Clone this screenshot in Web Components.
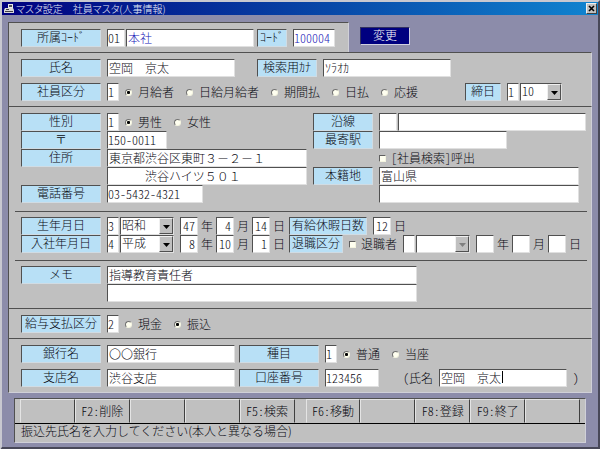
<!DOCTYPE html>
<html lang="ja">
<head>
<meta charset="utf-8">
<title>マスタ設定　社員マスタ(人事情報)</title>
<style>
html, body { height: 100%; }
body {
  margin: 0;
  font: 300 12px/14px "Noto Sans CJK JP", "Liberation Sans", sans-serif;
  color: #080810;
  --face: #c0c0c0;
  --lit: #e0e0e0;
  --dark: #505050;
  --frame: #8c8caa;
  --caption: #b8e0f6;
  --half: "hwid";
}
</style>
</head>
<body>
<employee-master></employee-master>

<script>
const define = (name, html, setup) => customElements.define(name, class extends HTMLElement {
  constructor() {
    super();
    this.attachShadow({ mode: "open" });
  }
  connectedCallback() {
    if (this.shadowRoot.childNodes.length) return;
    const t = document.createElement("template");
    t.innerHTML = typeof html === "function" ? html(this) : html;
    this.shadowRoot.append(t.content.cloneNode(true));
    if (setup) setup(this);
  }
});

/* Outer window with its title bar */
define("app-window", host => `
<style>
:host { display: flex; flex-direction: column; min-height: 100vh; box-sizing: border-box;
  background: var(--frame); border: 2px solid #c8c8d0; border-right-color: #484858; border-bottom: 3px solid #484858; }
header { display: flex; align-items: center; gap: 2px; height: 13px; padding: 0 1px 0 2px;
  background: linear-gradient(90deg, #000080, #0848a8 55%, #1084d0); color: #e8ecf8; }
h1 { margin: 0; flex: 1; font: inherit; font-size: 10px; line-height: 13px; font-feature-settings: "palt", "pwid"; }
button { width: 11px; height: 11px; padding: 0; display: grid; place-items: center; background: var(--face);
  border: 1px solid; border-color: #f0f0f0 #404040 #404040 #f0f0f0; }
main { flex: 1; padding: 7px 6px 4px; }
</style>
<header>
  <svg width="10" height="10" viewBox="0 0 10 10" aria-hidden="true">
    <path d="M4 0h5v4H4z" fill="#e8e8e8"/><path d="M5 1h3v2H5z" fill="#505058"/>
    <path d="M1 4h8l1 2v3H0V6z" fill="#d8d8d8"/><path d="M2 5h3v1H2zM1 7h8v1H1z" fill="#404048"/>
  </svg>
  <h1>${host.getAttribute("heading")}</h1>
  <button type="button" aria-label="閉じる"><svg width="7" height="7" viewBox="0 0 7 7"><path d="M1 1l5 5M6 1l-5 5" stroke="#000" stroke-width="1.6"/></svg></button>
</header>
<main><slot></slot></main>`);

/* Raised grey area holding rows */
define("form-panel", `
<style>
:host { display: flex; flex-direction: column; box-sizing: border-box; background: var(--face);
  border-top: 1px solid var(--dark); border-left: 1px solid var(--dark); border-right: 1px solid #d0d0d8;
  padding: 6px 4px var(--foot, 5px) 12px; gap: var(--row-gap, 0px); }
:host([last]) { border-bottom: 1px solid #d0d0d8; }
:host([inset]) { border-top: 0; padding-top: 0; }
:host([inset])::before { content: ""; border-top: 1px solid var(--dark); margin: 0 0 5px -6px; }
</style>
<slot></slot>`);

/* One line; the "end" slot starts at --split */
define("form-row", `
<style>
:host { display: flex; height: 18px; }
div { display: flex; align-items: stretch; gap: 6px; flex: none; }
.start { width: var(--split, auto); }
</style>
<div class="start"><slot></slot></div><div><slot name="end"></slot></div>`);

define("joined-fields", `
<style>:host { display: flex; gap: 1px; } :host([loose]) { gap: 3px; }</style><slot></slot>`);

/* Group of radio buttons sharing one name */
define("radio-set", host => {
  const picked = +host.getAttribute("picked");
  return `
<style>
:host { display: flex; align-items: center; gap: 12px; }
label { display: flex; align-items: center; gap: 6px; }
span { line-height: 18px; }
input { appearance: none; margin: 0; width: 7px; height: 7px; border-radius: 50%; background: #fffff0;
  border: 1px solid; border-color: #707070 #f4f4e0 #f4f4e0 #707070; box-sizing: border-box; display: grid; place-items: center; }
input:checked::before { content: ""; width: 3px; height: 3px; background: #000; border-radius: 1px; }
</style>` + host.getAttribute("options").split(",").map((o, i) =>
  `<label><input type="radio" name="r"${i === picked ? " checked" : ""}><span>${o}</span></label>`).join("");
});

define("check-item", host => `
<style>
:host { display: flex; align-items: center; }
label { display: flex; align-items: center; gap: 5px; line-height: 18px; font-feature-settings: var(--half); }
input { appearance: none; margin: 0; width: 7px; height: 7px; background: #fffff0; box-sizing: border-box;
  border: 1px solid; border-color: #606060 #f4f4e0 #f4f4e0 #606060; }
</style>
<label><input type="checkbox">${host.getAttribute("label")}</label>`);

/* Drop-down with a raised arrow key */
define("drop-down", host => {
  const off = host.hasAttribute("disabled"), v = host.getAttribute("value") || "";
  return `
<style>
:host { display: grid; grid-template-columns: 1fr 15px; width: var(--w, 54px); height: 18px; }
select { appearance: none; grid-area: 1 / 1 / 2 / 3; min-width: 0; margin: 0; padding: 0 15px 2px 1px; border-radius: 0;
  font: inherit; line-height: 14px; color: inherit; background: #fff; opacity: 1; font-feature-settings: var(--half);
  border: 1px solid; border-color: var(--dark) var(--lit) var(--lit) var(--dark); }
svg { grid-area: 1 / 2; pointer-events: none; margin: 1px 0; width: 12px; height: 14px; background: var(--face);
  border: 1px solid; border-color: #f0f0f0 #505050 #505050 #f0f0f0; }
</style>
<select aria-label="${host.getAttribute("label")}"${off ? " disabled" : ""}><option>${v}</option></select>
<svg viewBox="0 0 12 14" aria-hidden="true"><path d="M3 6h7l-3.5 4z" fill="${off ? "#808080" : "#000"}"/></svg>`;
});

/* Function keys and the guidance line */
define("function-bar", host => `
<style>
:host { display: block; margin: 5px 6px 0; border: 1px solid; border-color: var(--dark) #d0d0d8 #d0d0d8 var(--dark); background: var(--face); }
nav { display: flex; padding: 0 5px; border-bottom: 1px solid #000; }
nav button { flex: 1 1 0; min-width: 0; height: 24px; padding: 0; font: inherit; font-feature-settings: var(--half); color: inherit; background: var(--face); border: 1px solid;
  border-color: #e4e4e4 #404040 transparent #e4e4e4; border-radius: 0; }
nav button:nth-child(6) { margin-left: 11px; }
output { display: block; padding: 0 6px; height: 18px; line-height: 14px; font-feature-settings: "halt"; }
</style>
<nav>${host.getAttribute("keys").split(",").map((k, i) => `<button type="button"${k ? "" : ` aria-label="F${i + 1}"`}>${k}</button>`).join("")}</nav>
<output><slot></slot></output>`);

define("employee-master", `
<style>
:host { display: block; }
.top { display: flex; align-items: flex-start; }
.top form-panel { flex: 0 0 341px; }
.change { margin: 5px 0 0 11px; width: 50px; height: 18px; padding: 0 0 2px; font: inherit; line-height: 14px; color: #fff;
  background: #000080; border: 1px solid; border-color: #303060 #d0d0e0 #d0d0e0 #303060; border-radius: 0; }
label.cap { box-sizing: border-box; width: var(--w, 80px); height: 18px; text-align: center; white-space: nowrap;
  line-height: 14px; background: var(--caption);
  border: 1px solid; border-color: var(--dark) #d0dce4 #d0dce4 var(--dark); }
label.unit { width: 12px; text-align: center; line-height: 18px; }
input { box-sizing: border-box; width: var(--w, 128px); height: 18px; margin: 0; padding: 0 0 2px 1px; border-radius: 0;
  font: inherit; line-height: 14px; color: inherit; background: #fff; outline: 0;
  border: 1px solid; border-color: var(--dark) var(--lit) var(--lit) var(--dark); }
.num { font-feature-settings: var(--half); padding-left: 0; }
.n1 { --w: 12px; } .n2 { --w: 18px; } .right { text-align: right; padding-right: 2px; }
.w30 { --w: 30px; } .w36 { --w: 36px; } .w42 { --w: 42px; } .w54 { --w: 54px; } .w60 { --w: 60px; }
.w78 { --w: 78px; } .w96 { --w: 96px; } .w188 { --w: 188px; } .w200 { --w: 200px; } .w310 { --w: 310px; }
input.blue { color: #2020b8; }
.pad { visibility: hidden; }
.hold { margin-left: 18px; line-height: 18px; font-feature-settings: var(--half); }
.close { line-height: 18px; font-feature-settings: var(--half); }
/* text cursor of the active field */
.active { background: linear-gradient(#000, #000) 62px 1px / 1px 12px no-repeat #fff; }
.s236 { --split: 236px; } .s218 { --split: 218px; } .s292 { --split: 292px; } .s268 { --split: 268px; } .s444 { --split: 444px; }
</style>
<app-window heading="マスタ設定　社員マスタ(人事情報)">
  <div class="top">
    <form-panel>
      <form-row class="s236">
        <label class="cap" for="dept">所属ｺｰﾄﾞ</label>
        <joined-fields><input id="dept" class="num n2" value="01"><input class="blue" aria-label="所属名" value="本社"></joined-fields>
        <label slot="end" class="cap w30" for="code">ｺｰﾄﾞ</label><input slot="end" id="code" class="num blue w42" value="100004">
      </form-row>
    </form-panel>
    <button class="change" type="button">変更</button>
  </div>

  <form-panel style="--row-gap: 6px">
    <form-row class="s236">
      <label class="cap" for="name">氏名</label><input id="name" value="空岡　京太">
      <label slot="end" class="cap w60" for="kana">検索用ｶﾅ</label><input slot="end" id="kana" value="ｿﾗｵｶ">
    </form-row>
    <form-row class="s444">
      <label class="cap" for="kind">社員区分</label><input id="kind" class="num n1" value="1">
      <radio-set options="月給者,日給月給者,期間払,日払,応援" picked="0"></radio-set>
      <label slot="end" class="cap w36" for="close">締日</label>
      <joined-fields slot="end"><input id="close" class="num n1" value="1"><drop-down class="w42" label="締日" value="10"></drop-down></joined-fields>
    </form-row>
  </form-panel>

  <form-panel style="--foot: 8px">
    <form-row class="s292">
      <label class="cap" for="sex">性別</label><input id="sex" class="num n1" value="1">
      <radio-set options="男性,女性" picked="0"></radio-set>
      <label slot="end" class="cap w60" for="line">沿線</label>
      <joined-fields slot="end"><input id="line" class="n2"><input class="w188" aria-label="沿線名"></joined-fields>
    </form-row>
    <form-row class="s292">
      <label class="cap" for="zip">〒</label><input id="zip" class="num w60" value="150-0011">
      <label slot="end" class="cap w60" for="station">最寄駅</label><input slot="end" id="station">
    </form-row>
    <form-row class="s292">
      <label class="cap" for="addr">住所</label><input id="addr" class="w200" value="東京都渋谷区東町３－２－１">
      <label slot="end" class="cap w60 pad"></label><check-item slot="end" label="[社員検索]呼出"></check-item>
    </form-row>
    <form-row class="s292">
      <label class="cap pad"></label><input class="w200" aria-label="住所2" value="　　　渋谷ハイツ５０１">
      <label slot="end" class="cap w60" for="home">本籍地</label><input slot="end" id="home" class="w200" value="富山県">
    </form-row>
    <form-row class="s292">
      <label class="cap" for="tel">電話番号</label><input id="tel" class="num w96" value="03-5432-4321">
      <label slot="end" class="cap w60 pad"></label><input slot="end" class="w200" aria-label="本籍地2">
    </form-row>
  </form-panel>

  <form-panel inset style="--foot: 7px">
    <form-row class="s268">
      <label class="cap" for="birth">生年月日</label>
      <joined-fields><input id="birth" class="num n1" value="3"><drop-down label="生年の元号" value="昭和"></drop-down></joined-fields>
      <joined-fields loose><input id="by" class="num n2 right" value="47"><label class="unit" for="by">年</label><input id="bm" class="num n2 right" value="4"><label class="unit" for="bm">月</label><input id="bd" class="num n2 right" value="14"><label class="unit" for="bd">日</label></joined-fields>
      <label slot="end" class="cap w78" for="leave">有給休暇日数</label>
      <joined-fields slot="end" loose><input id="leave" class="num n2 right" value="12"><label class="unit" for="leave">日</label></joined-fields>
    </form-row>
    <form-row class="s268">
      <label class="cap" for="join">入社年月日</label>
      <joined-fields><input id="join" class="num n1" value="4"><drop-down label="入社年の元号" value="平成"></drop-down></joined-fields>
      <joined-fields loose><input id="jy" class="num n2 right" value="8"><label class="unit" for="jy">年</label><input id="jm" class="num n2 right" value="10"><label class="unit" for="jm">月</label><input id="jd" class="num n2 right" value="1"><label class="unit" for="jd">日</label></joined-fields>
      <label slot="end" class="cap w54" for="retire">退職区分</label>
      <check-item slot="end" label="退職者"></check-item>
      <joined-fields slot="end"><input id="retire" class="n1"><drop-down label="退職年の元号" disabled></drop-down></joined-fields>
      <joined-fields slot="end" loose><input id="ry" class="n2"><label class="unit" for="ry">年</label><input id="rm" class="n2"><label class="unit" for="rm">月</label><input id="rd" class="n2"><label class="unit" for="rd">日</label></joined-fields>
    </form-row>
  </form-panel>

  <form-panel inset style="--foot: 6px">
    <form-row><label class="cap" for="memo">メモ</label><input id="memo" class="w310" value="指導教育責任者"></form-row>
    <form-row><label class="cap pad"></label><input class="w310" aria-label="メモ2"></form-row>
  </form-panel>

  <form-panel>
    <form-row>
      <label class="cap" for="pay">給与支払区分</label><input id="pay" class="num n1" value="2">
      <radio-set options="現金,振込" picked="1"></radio-set>
    </form-row>
  </form-panel>

  <form-panel last style="--row-gap: 6px">
    <form-row class="s218">
      <label class="cap" for="bank">銀行名</label><input id="bank" value="〇〇銀行">
      <label slot="end" class="cap" for="type">種目</label><input slot="end" id="type" class="num n1" value="1">
      <radio-set slot="end" options="普通,当座" picked="0"></radio-set>
    </form-row>
    <form-row class="s218">
      <label class="cap" for="branch">支店名</label><input id="branch" value="渋谷支店">
      <label slot="end" class="cap" for="account">口座番号</label><input slot="end" id="account" class="num w54" value="123456">
      <label slot="end" class="hold" for="holder">(氏名</label><input slot="end" id="holder" class="active" value="空岡　京太"><span slot="end" class="close">)</span>
    </form-row>
  </form-panel>

  <function-bar keys=",F2:削除,,,F5:検索,F6:移動,,F8:登録,F9:終了,">振込先氏名を入力してください(本人と異なる場合)</function-bar>
</app-window>`);
</script>
</body>
</html>
